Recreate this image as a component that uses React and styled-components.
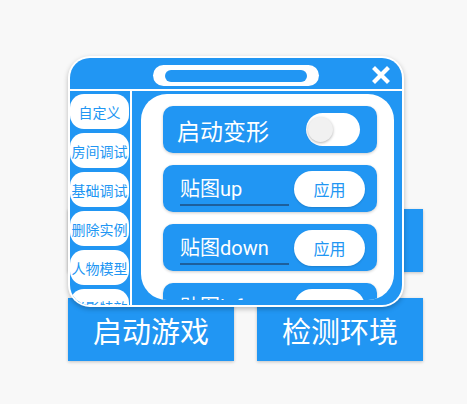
import React from 'react';
import styled, { createGlobalStyle } from 'styled-components';

const blue = '#2196f3';

const GlobalStyle = createGlobalStyle`
  html, body {
    margin: 0;
    padding: 0;
    background: #f8f8f8;
    font-family: Roboto, "Noto Sans CJK SC", sans-serif;
  }
`;

const Page = styled.div`
  position: relative;
  width: 467px;
  height: 404px;
  overflow: hidden;
`;

const ButtonGrid = styled.div`
  display: grid;
  grid-template-columns: 166px 166px;
  grid-auto-rows: 63px;
  column-gap: 23px;
  row-gap: 26px;
  padding: 209px 0 0 68px;
`;

const MainButton = styled.div`
  background: ${blue};
  color: #fff;
  font-size: 29px;
  display: flex;
  align-items: center;
  justify-content: center;
  box-shadow: 0 1px 3px rgba(0, 0, 0, 0.22);
`;

const FloatWindow = styled.div`
  position: absolute;
  left: 68px;
  top: 56px;
  width: 336px;
  height: 251px;
  box-sizing: border-box;
  padding: 2px;
  background: #fff;
  border-radius: 22px;
  box-shadow: 0 2px 5px rgba(0, 0, 0, 0.25);
`;

const WindowInner = styled.div`
  height: 100%;
  background: ${blue};
  border-radius: 20px;
  overflow: hidden;
  display: flex;
  flex-direction: column;
`;

const Header = styled.div`
  height: 31px;
  display: grid;
  grid-template-columns: 1fr auto 1fr;
  align-items: center;
`;

const Handle = styled.div`
  grid-column: 2;
  width: 166px;
  height: 21px;
  border-radius: 11px;
  background: #fff;
  display: flex;
  align-items: center;
  justify-content: center;
  margin-top: 4px;
`;

const HandleBar = styled.div`
  width: 142px;
  height: 12px;
  border-radius: 6px;
  background: ${blue};
`;

const Close = styled.div`
  grid-column: 3;
  justify-self: end;
  margin-right: 12px;
  margin-top: 2px;
  display: flex;
`;

const HLine = styled.div`
  height: 2px;
  background: #fff;
  flex-shrink: 0;
`;

const Body = styled.div`
  flex: 1;
  min-height: 0;
  display: flex;
`;

const Sidebar = styled.div`
  width: 60px;
  flex-shrink: 0;
  display: flex;
  flex-direction: column;
  gap: 4px;
  padding-top: 3px;
  overflow: hidden;
`;

const SideItem = styled.div`
  width: 59px;
  height: 35px;
  flex-shrink: 0;
  border-radius: 14px;
  background: #fff;
  color: ${blue};
  font-size: 14px;
  white-space: nowrap;
  display: flex;
  align-items: center;
  justify-content: center;
  overflow: hidden;
`;

const VLine = styled.div`
  width: 2px;
  background: #fff;
  flex-shrink: 0;
`;

const Content = styled.div`
  flex: 1;
  min-width: 0;
  padding: 3px 8px 5px 9px;
  display: flex;
`;

const Panel = styled.div`
  flex: 1;
  background: #fff;
  border-radius: 26px;
  padding: 12px 17px 0 22px;
  overflow: hidden;
  display: flex;
  flex-direction: column;
  gap: 12px;
`;

const Card = styled.div`
  height: 47px;
  flex-shrink: 0;
  background: ${blue};
  border-radius: 10px;
  display: flex;
  align-items: center;
  justify-content: space-between;
  padding: ${p => (p.$toggle ? '0 17px 0 14px' : '0 12px 0 17px')};
  box-shadow: 0 1px 3px rgba(0, 0, 0, 0.2);
`;

const Label = styled.span`
  color: #fff;
  font-size: 23px;
`;

const Switch = styled.div`
  width: 54px;
  height: 33px;
  border-radius: 17px;
  background: #fff;
  display: flex;
  align-items: center;
  padding-left: 2px;
  box-sizing: border-box;
`;

const Thumb = styled.div`
  width: 25px;
  height: 25px;
  border-radius: 50%;
  background: #f1f1f1;
  box-shadow: 0 1px 3px rgba(0, 0, 0, 0.3);
`;

const Field = styled.div`
  width: 109px;
  height: 30px;
  margin-top: 4px;
  box-sizing: border-box;
  border-bottom: 2px solid #1d5f9c;
  color: #fff;
  font-size: 20px;
  line-height: 27px;
  white-space: nowrap;
`;

const ApplyButton = styled.div`
  width: 71px;
  height: 36px;
  border-radius: 18px;
  background: #fff;
  color: ${blue};
  font-size: 16px;
  display: flex;
  align-items: center;
  justify-content: center;
  box-shadow: 0 1px 2px rgba(0, 0, 0, 0.15);
`;

const menu = ['自定义', '房间调试', '基础调试', '删除实例', '人物模型', '光影特效'];
const textures = ['贴图up', '贴图down', '贴图left'];

export default function App() {
  return (
    <Page>
      <GlobalStyle />
      <ButtonGrid>
        <MainButton />
        <MainButton />
        <MainButton>启动游戏</MainButton>
        <MainButton>检测环境</MainButton>
      </ButtonGrid>
      <FloatWindow>
        <WindowInner>
          <Header>
            <Handle>
              <HandleBar />
            </Handle>
            <Close>
              <svg width="18" height="18" viewBox="0 0 18 18">
                <path d="M3 3 L15 15 M15 3 L3 15" stroke="#fff" strokeWidth="4.2" strokeLinecap="square" />
              </svg>
            </Close>
          </Header>
          <HLine />
          <Body>
            <Sidebar>
              {menu.map(m => (
                <SideItem key={m}>{m}</SideItem>
              ))}
            </Sidebar>
            <VLine />
            <Content>
              <Panel>
                <Card $toggle>
                  <Label>启动变形</Label>
                  <Switch>
                    <Thumb />
                  </Switch>
                </Card>
                {textures.map(t => (
                  <Card key={t}>
                    <Field>{t}</Field>
                    <ApplyButton>应用</ApplyButton>
                  </Card>
                ))}
              </Panel>
            </Content>
          </Body>
        </WindowInner>
      </FloatWindow>
    </Page>
  );
}
